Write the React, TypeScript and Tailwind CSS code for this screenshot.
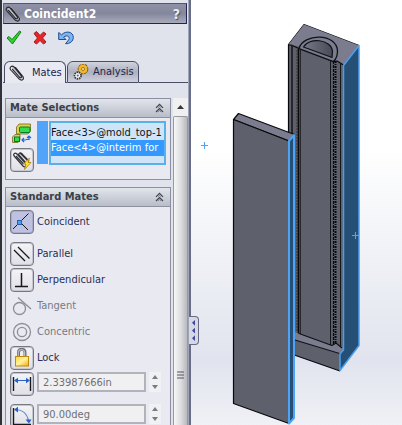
import React from "react";

const stroke = { fill: "none", stroke: "#16181d", strokeWidth: 1.3 };

function Clip({ color = "#25262c" }: { color?: string }) {
  return (
    <svg viewBox="0 0 16 16" className="h-4 w-4 shrink-0" aria-hidden="true">
      <g fill="none" strokeLinecap="round" strokeLinejoin="round">
        <path d="M4 3 12 12.500M6.500 3 13.500 12" stroke="#c3c4ca" strokeWidth="2.2" />
        <path d="M6.500 2.500 13.500 11C15.800 14 13 16.500 10.300 14.200L1.800 5C-.2 2.200 3-.2 5.200 2.200L12 10.500C13.200 12.600 11.700 13.500 10.300 12L3.500 4.300" stroke={color} strokeWidth="1.1" />
      </g>
    </svg>
  );
}

function Chevrons() {
  return (
    <svg viewBox="0 0 9 10" className="h-[10px] w-[9px]" fill="none" stroke="#3c424e" strokeWidth="1.2" aria-hidden="true">
      <path d="M1 4.8 4.5 1.3 8 4.8M1 9 4.5 5.5 8 9" />
      <path d="M3.2 4.7 4.5 3.4 5.8 4.7M3.2 8.9 4.5 7.6 5.8 8.9" strokeWidth=".6" />
    </svg>
  );
}

function Group({ title, children }: { title: string; children: React.ReactNode }) {
  return (
    <section className="border border-[#8c8fa1] bg-[#e8e9f1]">
      <h2>
        <button className="flex h-[19px] w-full items-center justify-between border-b border-[#8e929f] bg-linear-to-b from-[#e2e5eb] via-[#cdd1d9] to-[#b8bdc9] pr-[6px] pl-[4px] text-[11px] font-bold text-[#3a3f49]">
          <span>{title}</span>
          <Chevrons />
        </button>
      </h2>
      {children}
    </section>
  );
}

function Coincident() {
  return (
    <svg viewBox="0 0 20 20" className="h-5 w-5" aria-hidden="true">
      <path d="M1 17 16.500 1.500M8 10 16 18" {...stroke} strokeWidth="1" />
      <rect x="5.500" y="8.500" width="4" height="4" fill="#48a0f0" stroke="#235fb5" />
    </svg>
  );
}
function Parallel() {
  return (
    <svg viewBox="0 0 20 20" className="h-5 w-5" aria-hidden="true">
      <path d="M6 3 17.500 14.500M2 6 13 17" {...stroke} />
    </svg>
  );
}
function Perpendicular() {
  return (
    <svg viewBox="0 0 20 20" className="h-5 w-5" aria-hidden="true">
      <path d="M9.500 3V16M3 16.500H16" {...stroke} strokeWidth="1.5" />
    </svg>
  );
}
function Tangent() {
  return (
    <svg viewBox="0 0 20 20" className="h-5 w-5" fill="none" stroke="#8e8f96" strokeWidth="1.3" aria-hidden="true">
      <circle cx="7.500" cy="12.500" r="6" />
      <path d="M6 1.500 19 13" />
    </svg>
  );
}
function Concentric() {
  return (
    <svg viewBox="0 0 20 20" className="h-5 w-5" fill="none" stroke="#8e8f96" strokeWidth="1.3" aria-hidden="true">
      <circle cx="10" cy="10" r="8.500" />
      <circle cx="10" cy="10" r="4.600" />
    </svg>
  );
}
function Padlock() {
  return (
    <svg viewBox="0 0 20 20" className="h-5 w-5" aria-hidden="true">
      <defs>
        <linearGradient id="brass" x1="0" y1="0" x2="1" y2="1">
          <stop offset="0" stopColor="#ffd733" />
          <stop offset=".5" stopColor="#fff3a0" />
          <stop offset="1" stopColor="#f0ac08" />
        </linearGradient>
      </defs>
      <path d="M6.500 9V4.500C6.500.3 13 .3 13 4.500V9" fill="none" stroke="#6d7078" strokeWidth="3" />
      <path d="M6.300 9V4.500C6.300.6 12.600.6 12.600 4.500V9" fill="none" stroke="#b9bcc2" strokeWidth="1.2" />
      <rect x="3.500" y="8.500" width="13" height="9.500" fill="url(#brass)" stroke="#c08a10" />
    </svg>
  );
}
function Distance() {
  return (
    <svg viewBox="0 0 20 20" className="h-5 w-5" aria-hidden="true">
      <path d="M1.500 3V17M18.500 3V17" {...stroke} strokeWidth="1.4" />
      <path d="M3 6.500H17" stroke="#2461cf" />
      <path d="M2 6.500 6 3.700V9.300ZM18 6.500 14 3.700V9.300Z" fill="#2461cf" />
    </svg>
  );
}
function Angle() {
  return (
    <svg viewBox="0 0 20 20" className="h-5 w-5" aria-hidden="true">
      <path d="M1.500 2V18.500H19" {...stroke} strokeWidth="1.4" />
      <path d="M4 3.500C12 4 15 8 16.500 14" fill="none" stroke="#5d8cc8" strokeWidth="1.2" />
      <path d="M2 3.500 6 .7V6.500ZM17 17.500 13.500 13.500H19.500Z" fill="#2461cf" />
    </svg>
  );
}

const raised = "flex h-6 w-6 shrink-0 items-center justify-center rounded-[4px] border border-[#777982] bg-linear-to-b from-[#f4f4f7] to-[#dfdfe6] ring-1 ring-inset ring-[#c6c7cf]";
const pressed = "flex h-6 w-6 shrink-0 items-center justify-center rounded-[4px] border border-[#777982] bg-[#bfc1e0] ring-1 ring-inset ring-[#a9abc8]";
const flat = "flex h-6 w-6 shrink-0 items-center justify-center";

function Mate({ id, label, icon, look, disabled }: { id: string; label: string; icon: React.ReactNode; look: string; disabled?: boolean }) {
  return (
    <div className="flex items-center gap-[3px]">
      <button id={id} className={look} disabled={disabled} aria-pressed={look === pressed}>{icon}</button>
      <label htmlFor={id} className={disabled ? "text-[#797a82]" : "text-[#2c2e55]"}>{label}</label>
    </div>
  );
}

function Measure({ name, value, icon }: { name: string; value: string; icon: React.ReactNode }) {
  return (
    <div className="flex items-start gap-[3px]">
      <button className={raised} aria-label={name}>{icon}</button>
      <input aria-label={`${name} value`} defaultValue={value} disabled className="h-5 min-w-0 flex-1 border-2 border-[#b1b2ba] bg-[#f0f0f2] px-1 text-[#6e6f75]" />
      <div className="mr-[9px] flex h-5 w-3 flex-col bg-[#f1f1f3]">
        <button className="flex flex-1 items-center justify-center" aria-label={`Increase ${name}`}>
          <svg viewBox="0 0 6 4" className="h-1 w-1.5"><path d="M0 4 3 0 6 4Z" fill="#7b7c82" /></svg>
        </button>
        <button className="flex flex-1 items-center justify-center" aria-label={`Decrease ${name}`}>
          <svg viewBox="0 0 6 4" className="h-1 w-1.5"><path d="M0 0 3 4 6 0Z" fill="#7b7c82" /></svg>
        </button>
      </div>
    </div>
  );
}

function Scene() {
  return (
    <svg viewBox="191 0 211 425" preserveAspectRatio="xMinYMin meet" className="h-full w-full" role="img" aria-label="Mold and interim parts">
      <defs>
        <linearGradient id="bore" x1="0" y1="0" x2="1" y2="0">
          <stop offset="0" stopColor="#777888" />
          <stop offset="1" stopColor="#484a55" />
        </linearGradient>
      </defs>
      <g strokeLinejoin="round">
        <path d="M288.500 44.500 304 24.500 359 45.500 343.500 65.500V350L340 371 288.500 353Z" fill="#5e616c" />
        <path d="M288.500 140V44.500L304 24.500 359 45.500M288.500 353 340 371" fill="none" stroke="#08090b" strokeWidth="1.2" />
        <path d="M288.500 44.500 304 24.500 359 45.500 343.500 65.500 340 62.500 334 61 300 49 298 46Z" fill="#7b7c8e" />
        <path d="M288.500 45H291L300 49 333 61.500 337 61 343.500 65" fill="none" stroke="#08090b" strokeWidth="1.2" />
        <path d="M299 48.500C303 33 337 33 337.500 51 337.500 56 336 59 333.500 61.500Z" fill="#7b7c8e" stroke="#111217" strokeWidth="1.3" />
        <path d="M303.500 47C309 37 331 39 332.500 51L332 57.500Z" fill="url(#bore)" stroke="#111217" strokeWidth="1.2" />
        <path d="M292 46V335" stroke="#25272d" strokeWidth="2" />
        <path d="M298.500 49V334" stroke="#08090b" strokeWidth="1.600" />
        <path d="M297 50V332" stroke="#33353c" strokeWidth="1" strokeDasharray="2 1" />
        <path d="M300.500 50V334" stroke="#25272d" />
        <path d="M330.500 61V345M340.500 64V350" stroke="#15171b" />
        <path d="M335.500 61V345" stroke="#08090b" strokeWidth="2" strokeDasharray="2 1 1 1" />
        <path d="M333.500 61V345" stroke="#08090b" strokeWidth="1.200" strokeDasharray="3 1" />
        <path d="M285 329 300 334 332 346 336 343 343 348V351L339.500 354 285 337Z" fill="#7b7c8e" />
        <path d="M299 333.500 332 345.500 336 343 342 348M285 337 339.500 353.500" fill="none" stroke="#111217" strokeWidth="1.2" />
        <path d="M359 45.500 343.500 65.500V350L340 354V370.500L359 345.500Z" fill="#264f76" stroke="#4b9eee" strokeWidth="1.5" />
        <path d="M233.500 119.500 238.500 113.500 294.500 134.500 289 141Z" fill="#7b7c8e" stroke="#08090b" strokeWidth="1.2" />
        <path d="M233.500 119.500 289 141V423.500L233.500 403.500Z" fill="#5e616c" stroke="#08090b" strokeWidth="1.2" />
        <path d="M289 141 294 135V418L289 423.500Z" fill="#264f76" stroke="#4fa3f5" strokeWidth="2" />
        <path d="M201 145.500H208M204.500 142V149M352 235.500H359M355.500 232V239" stroke="#4fa3f5" strokeWidth="1.1" />
      </g>
    </svg>
  );
}

export default function App() {
  return (
    <div className="flex h-screen overflow-hidden bg-white font-['DejaVu_Sans_Condensed','DejaVu_Sans',sans-serif] text-[11px] leading-4">
      <aside className="relative w-[191px] shrink-0 border-r-2 border-r-[#686e85] border-l-2 border-l-[#303238] bg-[#e1e3ec]">
        <div className="flex h-full flex-col overflow-hidden border-r border-[#a0a4b8] pt-[3px] pl-px">
          <header className="mr-px flex h-[21px] shrink-0 items-center border border-t-[#54576e] border-r-[#22254d] border-b-[#22254d] border-l-[#686b82] bg-linear-to-b from-[#8e90a5] via-[#85879d] to-[#a8aabc] pr-1.5 pl-px text-white">
            <Clip />
            <h1 className="ml-[3px] flex-1 text-[12px] font-bold">Coincident2</h1>
            <button aria-label="Help" className="text-[14px] font-bold text-[#ececf2] [text-shadow:1px_1px_1px_#555]">?</button>
          </header>
          <div className="flex h-[37px] shrink-0 items-start gap-2.5 pt-1.5 pl-[3px]">
            <button aria-label="OK">
              <svg viewBox="0 0 16 16" className="h-4 w-4"><path d="M1 8 3 6.500 6 9.500 13.500 1 15 2 6.500 14Z" fill="#2bd32b" stroke="#118019" /></svg>
            </button>
            <button aria-label="Cancel">
              <svg viewBox="0 0 16 16" className="h-4 w-4"><path d="M2 3.500 4.500 1.500 8 5.500 11.500 2 14 4 10.500 8 14 12 11.500 14 8 10.500 4.500 14 2 12 5.500 8Z" fill="#e9252a" stroke="#a5181d" /></svg>
            </button>
            <button aria-label="Undo">
              <svg viewBox="0 0 16 16" className="h-4 w-4"><path d="M.7 2.500V9.500H8L5.700 7.200C9 4.200 13.500 7 9.800 11L7.500 13.700C12 14 15.300 11 15.300 7.500 15.300 1.500 8 .3 3.500 4.800Z" fill="#7db4f2" stroke="#224d91" strokeLinejoin="round" /></svg>
            </button>
          </div>
          <div role="tablist" className="flex h-[22px] shrink-0 items-stretch text-[#22254d]">
            <div className="w-px border-b border-[#4a4e66]" />
            <button role="tab" aria-selected="true" className="flex w-[62px] items-center gap-[7px] rounded-t-[6px] border border-b-0 border-[#4a4e66] bg-[#e8e9f1] pl-[4px]">
              <Clip />Mates
            </button>
            <div className="w-px border-b border-[#4a4e66]" />
            <button role="tab" aria-selected="false" className="flex w-[72px] items-center gap-[4px] rounded-t-[6px] border border-[#4a4e66] bg-linear-to-b from-[#d1d3de] via-[#adb0bf] to-[#ced0dc] pl-[5px]">
              <svg viewBox="0 0 16 16" className="h-4 w-4 shrink-0" aria-hidden="true">
                <circle cx="10" cy="5" r="4.200" fill="#ffe27b" stroke="#7d5100" strokeWidth="2.200" strokeDasharray="2.400 .6" />
                <circle cx="10" cy="5" r="3.200" fill="none" stroke="#f5b524" strokeWidth="2.600" />
                <circle cx="10" cy="5" r="1.500" fill="#fff2c4" stroke="#7d5100" strokeWidth=".8" />
                <circle cx="4.800" cy="11.500" r="3.300" fill="#f4f4f4" stroke="#3a3b40" strokeWidth="1.700" strokeDasharray="1.600 .7" />
                <circle cx="4.800" cy="11.500" r="1" fill="#666" />
              </svg>
              Analysis
            </button>
            <div className="flex-1 border-b border-[#4a4e66]" />
          </div>
          <div className="mt-[15px] flex min-h-0 flex-1">
            <div className="flex min-w-0 flex-1 flex-col gap-[7px] pr-[2px] pl-[2px]">
              <Group title="Mate Selections">
                <div className="flex h-[61px] pt-[3px] pl-[4px]">
                  <div className="mr-[3px] flex flex-col gap-[3px]">
                    <div className={flat}>
                      <svg viewBox="0 0 20 20" className="h-5 w-5" aria-hidden="true">
                        <path d="M4.500 4 7 1H18.500V8L16 11H4.500Z" fill="#e2cf4c" stroke="#665a13" strokeWidth=".7" />
                        <rect x="7.500" y="4" width="10.500" height="5.500" rx="1" fill="#32dc50" stroke="#087b22" />
                        <path d="M.5 14 3 11.500H8V17L6 19.500H.5Z" fill="#e2cf4c" stroke="#665a13" strokeWidth=".7" />
                        <rect x="2.500" y="14" width="5" height="4.500" fill="#32dc50" stroke="#087b22" />
                        <path d="M10 17H14M12 15 10 17 12 19M17 13V16.500H14M15 15 17 13 19 15" fill="none" stroke="#2166d1" strokeWidth="1.200" />
                      </svg>
                    </div>
                    <button className={raised} aria-label="Multiple mate mode">
                      <svg viewBox="0 0 20 20" className="h-5 w-5" aria-hidden="true">
                        <path d="M3 7 11 16C13 18 15 16 14 14L5 4C3 2 0 4 3 7ZM4 6 11.500 14M8 3 17 12M6 4 15 14M7 4C8 2 10 3 11 5L17 11" fill="none" stroke="#33343a" strokeWidth="1.200" />
                        <path d="M17.500 8 11.500 14H14L12.500 19.500 19 12.500H16Z" fill="#ffe52c" stroke="#b28209" strokeWidth=".8" />
                      </svg>
                    </button>
                  </div>
                  <div className="h-[43px] w-[11px] bg-[#51a4fa]" />
                  <ul role="listbox" aria-label="Mate selections" className="ml-px h-11 w-[117px] overflow-hidden border-2 border-[#59b1e7] bg-[#d0e4f8] pt-0.5 whitespace-nowrap text-[#101216]">
                    <li role="option" aria-selected="false" className="h-[15px]">Face&lt;3&gt;@mold_top-1</li>
                    <li role="option" aria-selected="true" className="h-4 bg-[#3399ff] text-white">Face&lt;4&gt;@interim for</li>
                  </ul>
                </div>
              </Group>
              <Group title="Standard Mates">
                <div className="flex flex-col gap-2 pt-[3px] pb-3 pl-[4px]">
                  <Mate id="coincident" label="Coincident" icon={<Coincident />} look={pressed} />
                  <div className="flex flex-col gap-0.5">
                    <Mate id="parallel" label="Parallel" icon={<Parallel />} look={raised} />
                    <Mate id="perpendicular" label="Perpendicular" icon={<Perpendicular />} look={raised} />
                    <Mate id="tangent" label="Tangent" icon={<Tangent />} look={flat} disabled />
                    <Mate id="concentric" label="Concentric" icon={<Concentric />} look={flat} disabled />
                    <Mate id="lock" label="Lock" icon={<Padlock />} look={raised} />
                    <Measure name="Distance" value="2.33987666in" icon={<Distance />} />
                  </div>
                  <Measure name="Angle" value="90.00deg" icon={<Angle />} />
                </div>
              </Group>
            </div>
            <div className="flex w-[15px] shrink-0 flex-col bg-[#f0f0f1]">
              <button aria-label="Scroll up" className="flex h-[18px] shrink-0 items-center justify-center">
                <svg viewBox="0 0 7 4" className="h-1 w-[7px]"><path d="M0 4 3.500 0 7 4Z" fill="#34363c" /></svg>
              </button>
              <div className="flex flex-1 items-center justify-center rounded-t-[2px] border border-b-0 border-[#999aa0] bg-linear-to-r from-[#f6f6f7] via-[#dfdfe2] to-[#b8b9be] pt-[207px]">
                <svg viewBox="0 0 7 8" className="h-2 w-[7px]"><path d="M0 1H7M0 4H7M0 7H7" stroke="#55565c" /></svg>
              </div>
            </div>
          </div>
        </div>
        <button aria-label="Collapse panel" className="absolute top-[316px] -right-[10px] flex h-[29px] w-[10px] flex-col items-center justify-around rounded-r-[4px] border border-l-0 border-[#666b82] bg-[#d6d8e4] py-0.5">
          <svg viewBox="0 0 5 24" className="h-6 w-[5px]"><path d="M4 1V7L1 4ZM4 9V15L1 12ZM4 17V23L1 20Z" fill="#37449b" /></svg>
        </button>
      </aside>
      <main className="min-w-0 flex-1 bg-linear-to-b from-white from-35% via-[#e1e4ee] via-85% to-[#f0f1f6]">
        <Scene />
      </main>
    </div>
  );
}
